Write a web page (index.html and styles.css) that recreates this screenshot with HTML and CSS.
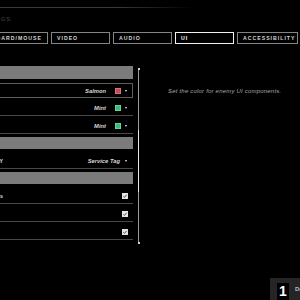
FILE: index.html
```html
<!DOCTYPE html>
<html lang="en">
<head>
<meta charset="utf-8">
<title>UI Settings</title>
<link rel="stylesheet" href="styles.css">
</head>
<body>
<div class="screen">
  <div class="topline"></div>
  <div class="title"><span>SETTINGS</span></div>
  <nav class="tabs">
    <div class="tab first">KEYBOARD/MOUSE</div>
    <div class="tab">VIDEO</div>
    <div class="tab">AUDIO</div>
    <div class="tab active">UI</div>
    <div class="tab wide">ACCESSIBILITY</div>
  </nav>
  <main class="content">
    <div class="list">
      <div class="hdr"></div>
      <div class="row sel">
        <span class="lbl off"><span>ENEMY COLOR</span></span>
        <span class="val"><span class="txt">Salmon</span><span class="sw salmon"></span><span class="arr"></span></span>
      </div>
      <div class="row">
        <span class="lbl off"><span>ALLY COLOR</span></span>
        <span class="val"><span class="txt">Mint</span><span class="sw mint"></span><span class="arr"></span></span>
      </div>
      <div class="row">
        <span class="lbl off"><span>FRIEND COLOR</span></span>
        <span class="val"><span class="txt">Mint</span><span class="sw mint"></span><span class="arr"></span></span>
      </div>
      <div class="hdr h2"></div>
      <div class="row after">
        <span class="lbl"><span>NAMEPLATE PRIORITY</span></span>
        <span class="val"><span class="txt">Service Tag</span><span class="arr wide"></span></span>
      </div>
      <div class="hdr h2"></div>
      <div class="row after">
        <span class="lbl"><span>Show Indicators</span></span>
        <span class="val"><span class="chk"><svg viewBox="0 0 6 6" width="6" height="6"><polyline points="1.4,3.4 2.5,4.4 4.6,1.8" fill="none" stroke="#444" stroke-width="0.9"/></svg></span></span>
      </div>
      <div class="row">
        <span class="lbl off"><span>Hit Marker</span></span>
        <span class="val"><span class="chk"><svg viewBox="0 0 6 6" width="6" height="6"><polyline points="1.4,3.4 2.5,4.4 4.6,1.8" fill="none" stroke="#444" stroke-width="0.9"/></svg></span></span>
      </div>
      <div class="row">
        <span class="lbl off"><span>Kill Feed</span></span>
        <span class="val"><span class="chk"><svg viewBox="0 0 6 6" width="6" height="6"><polyline points="1.4,3.4 2.5,4.4 4.6,1.8" fill="none" stroke="#444" stroke-width="0.9"/></svg></span></span>
      </div>
    </div>
    <div class="scroll">
      <span class="dot"></span>
      <span class="sline"></span>
      <span class="dot"></span>
    </div>
    <p class="desc">Set the color for enemy UI components.</p>
  </main>
  <footer class="footer">
    <div class="defbtn">
      <span class="key">1</span>
      <span class="deflbl">Defaults</span>
    </div>
  </footer>
</div>
</body>
</html>
```

FILE: styles.css
```css
* { box-sizing: border-box; margin: 0; padding: 0; }
html, body { width: 300px; height: 300px; overflow: hidden; background: #000; }
body { font-family: "Liberation Sans", Arial, sans-serif; color: #ddd; }

.screen { height: 300px; display: flex; flex-direction: column; }

.topline {
  flex: none;
  margin-top: 7px;
  height: 1px;
  width: 195px;
  background: linear-gradient(to right, #3a3a3a 0, #3a3a3a 60%, rgba(58,58,58,0) 100%);
}
.title {
  flex: none;
  margin-top: 7px;
  height: 8px;
  width: 11px;
  display: flex;
  justify-content: flex-end;
  font-size: 6px;
  line-height: 8px;
  font-weight: bold;
  letter-spacing: 0.8px;
  color: #333;
  white-space: nowrap;
}

.tabs {
  flex: none;
  margin-top: 9px;
  height: 12px;
  display: flex;
  justify-content: flex-end;
  gap: 3px;
  padding-right: 2px;
}
.tab {
  flex: none;
  width: 59px;
  height: 12px;
  border: 1px solid #848484;
  padding-left: 5px;
  font-size: 5.2px;
  font-weight: bold;
  letter-spacing: 1px;
  line-height: 10px;
  color: #d4d4d4;
  white-space: nowrap;
}
.tab.first { width: auto; padding-right: 5px; }
.tab.active { border-color: #f2f2f2; color: #fff; }
.tab.wide { width: 61px; }

.content { flex: none; display: flex; align-items: flex-start; }

.list { flex: none; margin-left: -20px; width: 153px; margin-top: 22px; }
.hdr { height: 13px; background: #7b7b7b; }
.hdr.h2 { height: 12px; margin-top: 3px; }

.row {
  height: 18px;
  display: flex;
  align-items: center;
  padding: 2px 6px 0 0;
  border-bottom: 1px solid #484848;
}
.row.sel {
  margin-top: 4px;
  height: 15px;
  padding-top: 0;
  border: 1px solid #5e5e5e;
  padding-right: 5px;
}
.row.after { margin-top: 2px; }

.lbl {
  flex: none;
  width: 24px;
  display: flex;
  justify-content: flex-end;
  white-space: nowrap;
  font-size: 5.2px;
  font-weight: bold;
  letter-spacing: 1px;
  color: #e0e0e0;
}
.lbl.off { width: 12px; }

.val { margin-left: auto; display: flex; align-items: center; }
.txt {
  font-size: 5.8px;
  font-style: italic;
  font-weight: bold;
  color: #d6d6d6;
  white-space: nowrap;
}
.sw { width: 6px; height: 6px; margin-left: 9px; }
.salmon { background: #c44a5c; border: 1px solid #d8707e; }
.mint { background: #3cba7b; border: 1px solid #62d69a; }
.arr {
  width: 0;
  height: 0;
  margin-left: 4px;
  border-left: 1.5px solid transparent;
  border-right: 1.5px solid transparent;
  border-top: 2.5px solid #eeeeee;
}
.arr.wide { margin-left: 5px; }
.chk {
  display: block;
  width: 6px;
  height: 6px;
  background: #e4e4e4;
  margin-right: -1px;
}
.chk svg { display: block; }

.scroll {
  flex: none;
  margin-left: 4px;
  margin-top: 24px;
  width: 3px;
  height: 176px;
  display: flex;
  flex-direction: column;
  align-items: center;
}
.dot { flex: none; width: 2px; height: 2px; background: #d0d0d0; }
.sline {
  flex: 1;
  width: 1px;
  background: linear-gradient(#9a9a9a 0, #9a9a9a 60px, #e6e6e6 60px, #e6e6e6 122px, #9a9a9a 122px);
}

.desc {
  flex: none;
  margin-left: 28px;
  margin-top: 43px;
  font-size: 6px;
  line-height: 8px;
  letter-spacing: 0.2px;
  font-style: italic;
  color: #a6a6a6;
  white-space: nowrap;
}

.footer {
  flex: none;
  margin-top: auto;
  height: 22px;
  display: flex;
  justify-content: flex-end;
}
.defbtn {
  width: 30px;
  height: 22px;
  background: #252525;
  display: flex;
  gap: 6px;
  padding: 5px 0 0 7px;
  overflow: hidden;
}
.key {
  flex: none;
  width: 12px;
  height: 17px;
  background: #000;
  color: #fff;
  font-weight: bold;
  font-size: 14px;
  line-height: 17px;
  text-align: center;
}
.deflbl {
  font-size: 6px;
  line-height: 12px;
  font-weight: bold;
  color: #bdbdbd;
  white-space: nowrap;
}
```
